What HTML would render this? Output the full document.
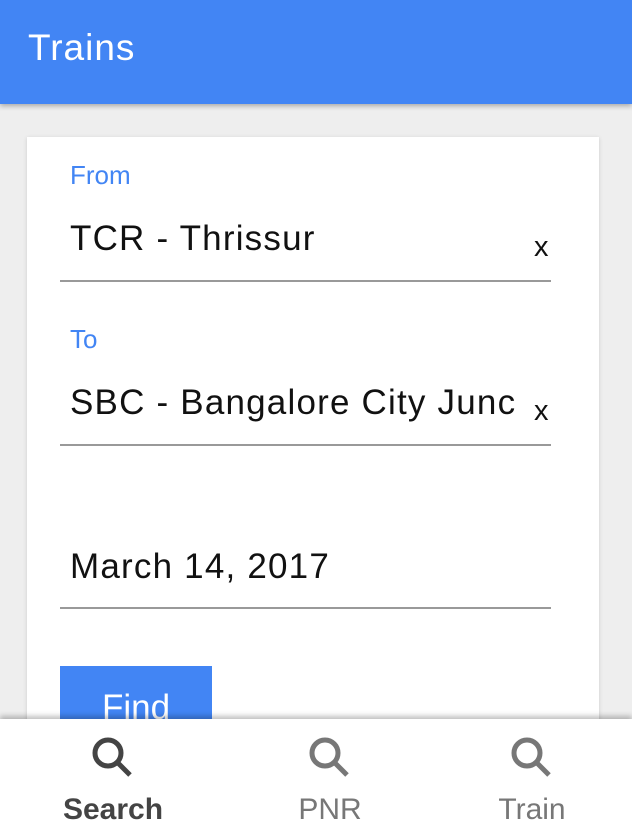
<!DOCTYPE html>
<html><head><style>
body{margin:0;width:632px;height:828px;overflow:hidden;background:#eeeeee;font-family:"Liberation Sans",sans-serif;position:relative}
.hdr{position:absolute;left:0;top:0;width:632px;height:104px;background:#4285f4;box-shadow:0 2px 5px rgba(0,0,0,.3)}
.hdr span{position:absolute;left:28px;top:27px;color:#fff;font-size:37px;letter-spacing:1px}
.card{position:absolute;left:27px;top:137px;width:572px;height:700px;background:#fff;box-shadow:0 1px 4px rgba(0,0,0,.15)}
.t{position:absolute;white-space:nowrap}
.lab{color:#4285f4;font-size:26px;left:70px}
.val{color:#111;font-size:35px;letter-spacing:1.2px;left:70px}
.x{color:#111;font-size:29px;left:534px}
.line{position:absolute;left:60px;width:491px;height:2px;background:#999}
.btn{position:absolute;left:60px;top:666px;width:152px;height:70px;background:#4285f4;color:#fff;font-size:35px;text-align:center;line-height:84px}
.nav{position:absolute;left:0;top:719px;width:632px;height:120px;background:#fff;box-shadow:0 -3px 5px rgba(0,0,0,.25)}
.it{position:absolute;top:0;width:200px;text-align:center;font-size:30px}
.it svg{display:block;margin:14px auto 0}
</style></head><body>
<div class="hdr"><span>Trains</span></div>
<div class="card"></div>
<div class="t lab" style="top:160px">From</div>
<div class="t val" style="top:219px">TCR - Thrissur</div>
<div class="t x" style="top:231px">x</div>
<div class="line" style="top:280px"></div>
<div class="t lab" style="top:324px">To</div>
<div class="t val" style="top:383px">SBC - Bangalore City Junc</div>
<div class="t x" style="top:395px">x</div>
<div class="line" style="top:444px"></div>
<div class="t val" style="top:547px">March 14, 2017</div>
<div class="line" style="top:607px"></div>
<div class="btn">Find</div>
<div class="nav">
<div class="it" style="left:13px;color:#444;font-weight:bold"><svg width="50" height="50" viewBox="0 0 50 50"><circle cx="20" cy="20" r="13" fill="none" stroke="#444" stroke-width="5"/><line x1="29" y1="29" x2="42" y2="42" stroke="#444" stroke-width="5"/></svg><div style="margin-top:10px">Search</div></div>
<div class="it" style="left:230px;color:#777"><svg width="50" height="50" viewBox="0 0 50 50"><circle cx="20" cy="20" r="13" fill="none" stroke="#777" stroke-width="5"/><line x1="29" y1="29" x2="42" y2="42" stroke="#777" stroke-width="5"/></svg><div style="margin-top:10px">PNR</div></div>
<div class="it" style="left:432px;color:#777"><svg width="50" height="50" viewBox="0 0 50 50"><circle cx="20" cy="20" r="13" fill="none" stroke="#777" stroke-width="5"/><line x1="29" y1="29" x2="42" y2="42" stroke="#777" stroke-width="5"/></svg><div style="margin-top:10px">Train</div></div>
</div>
</body></html>
